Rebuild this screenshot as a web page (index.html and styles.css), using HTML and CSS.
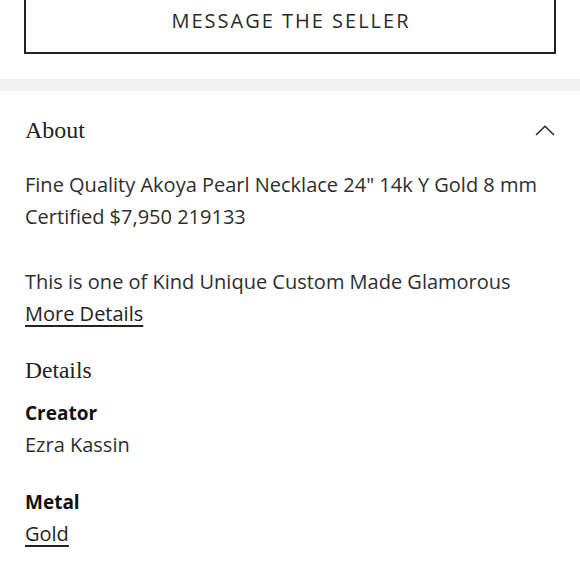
FILE: index.html
```html
<!DOCTYPE html>
<html>
<head>
<meta charset="utf-8">
<link rel="stylesheet" href="styles.css">
</head>
<body>
<div class="page">
  <div class="btn-wrap">
    <button class="msg">MESSAGE THE SELLER</button>
  </div>
  <div class="band"></div>
  <section class="about">
    <div class="about-head">
      <h2 class="serif-h">About</h2>
      <svg class="chev" width="20" height="11" viewBox="0 0 20 11"><path d="M1 10 L10 1.3 L19 10" fill="none" stroke="#222" stroke-width="1.5"/></svg>
    </div>
    <p class="txt">Fine Quality Akoya Pearl Necklace 24" 14k Y Gold 8 mm Certified $7,950 219133</p>
    <p class="txt">This is one of Kind Unique Custom Made Glamorous<br><a class="link" href="#">More Details</a></p>
    <h3 class="serif-h details">Details</h3>
    <div class="attr">
      <div class="label">Creator</div>
      <div class="txt">Ezra Kassin</div>
    </div>
    <div class="attr">
      <div class="label">Metal</div>
      <div class="txt"><a class="link" href="#">Gold</a></div>
    </div>
  </section>
</div>
</body>
</html>
```
FILE: styles.css
```css
html, body { margin: 0; padding: 0; background: #fff; }
.page { font-family: "Open Sans", "Liberation Sans", sans-serif; color: #2e2e2e; }
.btn-wrap { padding: 0 24px 25px 24px; margin-top: -14px; }
.msg {
  display: block; width: 100%; height: 68px; box-sizing: border-box;
  border: 2px solid #222; background: #fff; color: #2a2a2a;
  font-family: "Open Sans", "Liberation Sans", sans-serif; font-size: 20px; font-weight: 400;
  letter-spacing: 2px; padding: 0 0 0 2px;
}
.band { height: 12px; background: #f2f2f2; }
.about { padding: 0 25px; }
.about-head { display: flex; justify-content: space-between; align-items: center; height: 78px; }
.serif-h { font-family: "Liberation Serif", "Times New Roman", serif; font-weight: 400; font-size: 24px; margin: 0; color: #222; }
.chev { margin-right: 0; margin-top: 0; }
.txt { font-size: 20px; line-height: 32px; margin: 0; }
p.txt { margin: 0 0 33px 0; }
.link { color: #222; text-decoration: underline; text-underline-offset: 4px; }
.details { font-size: 23.5px; line-height: 40px; margin: -13px 0 7px 0; }
.label { font-weight: 700; font-size: 19px; line-height: 32px; color: #111; }
.attr { margin-bottom: 25px; }
```
